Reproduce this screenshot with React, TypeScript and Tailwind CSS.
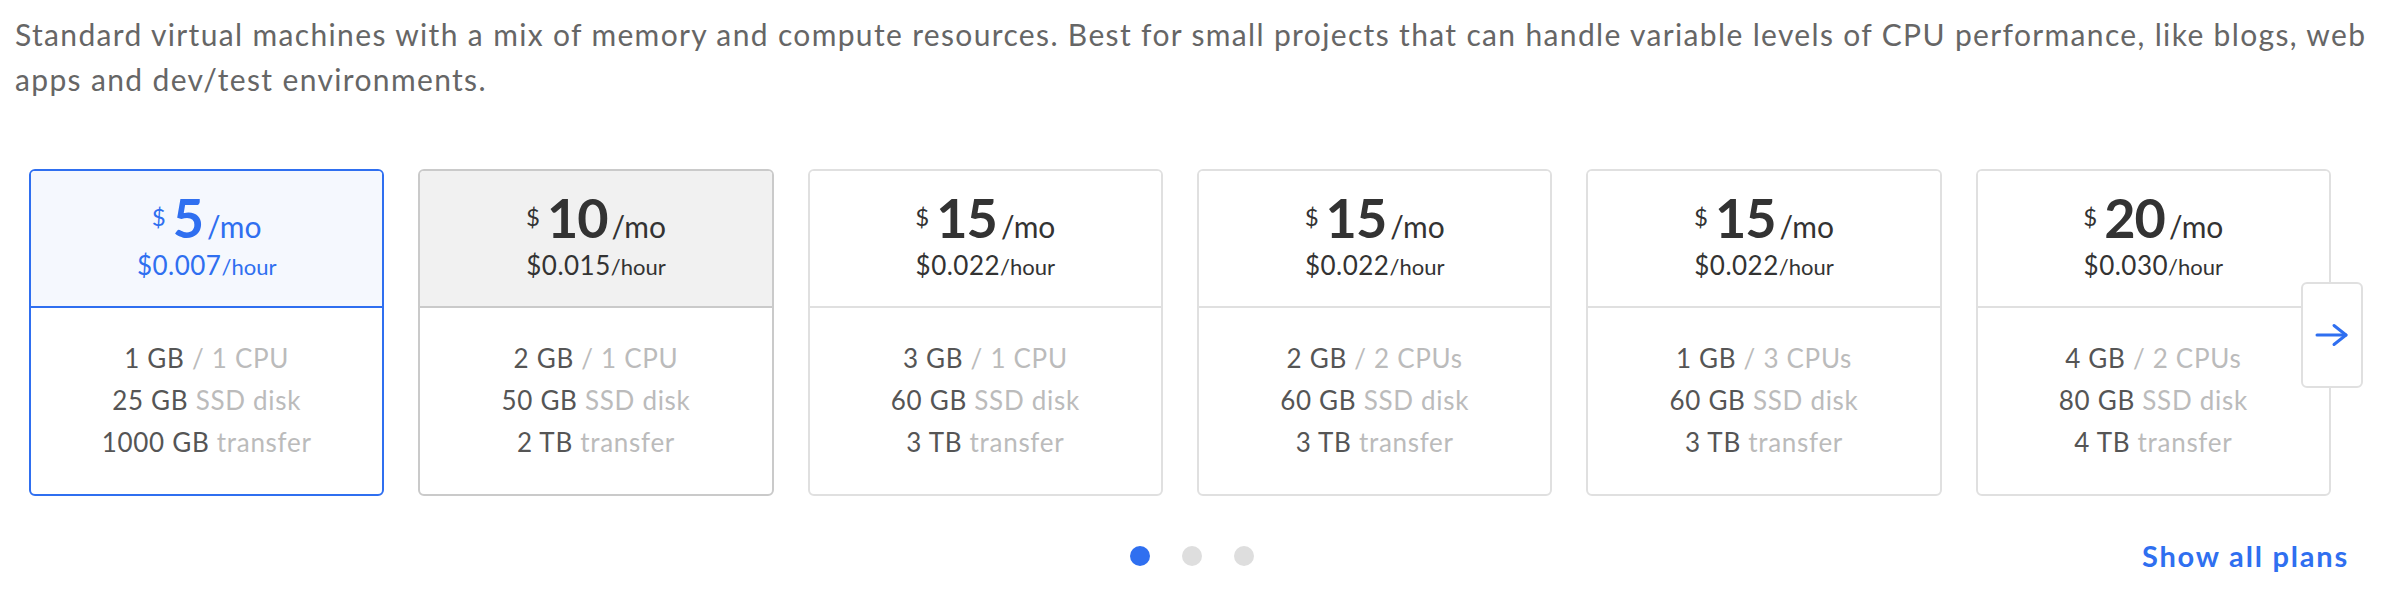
type Plan = {
  price: string;
  hourly: string;
  mem: string;
  cpu: string;
  disk: string;
  transfer: string;
};

const plans: Plan[] = [
  { price: "5", hourly: "$0.007", mem: "1 GB", cpu: "1 CPU", disk: "25 GB", transfer: "1000 GB" },
  { price: "10", hourly: "$0.015", mem: "2 GB", cpu: "1 CPU", disk: "50 GB", transfer: "2 TB" },
  { price: "15", hourly: "$0.022", mem: "3 GB", cpu: "1 CPU", disk: "60 GB", transfer: "3 TB" },
  { price: "15", hourly: "$0.022", mem: "2 GB", cpu: "2 CPUs", disk: "60 GB", transfer: "3 TB" },
  { price: "15", hourly: "$0.022", mem: "1 GB", cpu: "3 CPUs", disk: "60 GB", transfer: "3 TB" },
  { price: "20", hourly: "$0.030", mem: "4 GB", cpu: "2 CPUs", disk: "80 GB", transfer: "4 TB" },
];

function PlanCard({ plan, state }: { plan: Plan; state: "selected" | "hover" | "idle" }) {
  const selected = state === "selected";
  const hover = state === "hover";

  const border = selected
    ? "border-[#2f6ff0]"
    : hover
      ? "border-[#cacaca]"
      : "border-[#e0e0e0]";
  const head = selected ? "bg-[#f5f8fe]" : hover ? "bg-[#f1f1f1]" : "bg-white";
  const ink = selected ? "text-[#2f6ff0]" : "text-[#333]";

  return (
    <div className={`flex flex-col h-[327px] border-2 rounded-[6px] overflow-hidden bg-white ${border}`}>
      <div className={`h-[137px] shrink-0 flex flex-col items-center justify-center border-b-2 pb-[8px] ${border} ${head} ${ink}`}>
        <div className="leading-none whitespace-nowrap">
          <span className="relative -top-[12px] text-[24px] mr-[7px]">$</span>
          <span className="text-[54px] font-bold tracking-[-1px]">{plan.price}</span>
          <span className="text-[30px] ml-[4px]">/mo</span>
        </div>
        <div className="leading-none whitespace-nowrap mt-[7px]">
          <span className="text-[26px] tracking-[0.5px]">{plan.hourly}</span>
          <span className="text-[22px]">/hour</span>
        </div>
      </div>
      <div className="flex-1 flex flex-col items-center justify-center text-[26px] leading-[42px] tracking-[0.7px] pb-[2px]">
        <div>
          <span className="text-[#555]">{plan.mem}</span>{" "}
          <span className="text-[#bbb]">/ {plan.cpu}</span>
        </div>
        <div>
          <span className="text-[#555]">{plan.disk}</span>{" "}
          <span className="text-[#bbb]">SSD disk</span>
        </div>
        <div>
          <span className="text-[#555]">{plan.transfer}</span>{" "}
          <span className="text-[#bbb]">transfer</span>
        </div>
      </div>
    </div>
  );
}

export default function App() {
  return (
    <div className="w-[2392px] h-[602px] bg-white px-[15px] pt-[12px] font-['Lato','Liberation_Sans',sans-serif]">
      <p className="text-[30px] leading-[45px] text-[#666] tracking-[1.35px]">
        Standard virtual machines with a mix of memory and compute resources. Best for small projects that can handle
        variable levels of CPU performance, like blogs, web apps and dev/test environments.
      </p>

      <div className="relative mt-[67px] pl-[14px] pr-[46px]">
        <div className="grid grid-cols-6 gap-[34px]">
          {plans.map((p, i) => (
            <PlanCard key={i} plan={p} state={i === 0 ? "selected" : i === 1 ? "hover" : "idle"} />
          ))}
        </div>
        <button className="absolute right-[14px] top-[113px] w-[62px] h-[106px] flex items-center justify-center bg-white border-2 border-[#e0e0e0] rounded-[6px] text-[#2f6ff0]">
          <svg width="34" height="24" viewBox="0 0 34 24" fill="none" stroke="currentColor" strokeWidth="3" strokeLinecap="round" strokeLinejoin="round">
            <path d="M2 12H31" />
            <path d="M19 2.5L31 12L19 21.5" />
          </svg>
        </button>
      </div>

      <div className="grid grid-cols-[1fr_auto_1fr] items-center mt-[38px] h-[40px]">
        <div />
        <div className="flex items-center gap-[32px] mr-[8px]">
          <span className="w-[20px] h-[20px] rounded-full bg-[#2f6ff0]" />
          <span className="w-[20px] h-[20px] rounded-full bg-[#dedede]" />
          <span className="w-[20px] h-[20px] rounded-full bg-[#dedede]" />
        </div>
        <div className="flex justify-end pr-[28px]">
          <a className="text-[29px] font-bold text-[#2f6ff0] tracking-[1.8px]">Show all plans</a>
        </div>
      </div>
    </div>
  );
}
